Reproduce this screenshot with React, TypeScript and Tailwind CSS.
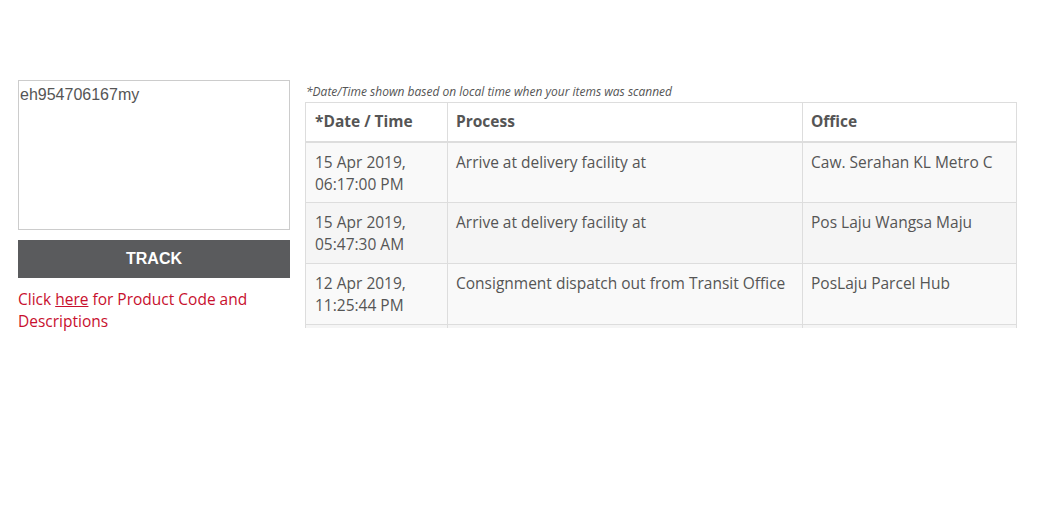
import React from "react";

const rows = [
  { date: "15 Apr 2019,", time: "06:17:00 PM", process: "Arrive at delivery facility at", office: "Caw. Serahan KL Metro C" },
  { date: "15 Apr 2019,", time: "05:47:30 AM", process: "Arrive at delivery facility at", office: "Pos Laju Wangsa Maju" },
  { date: "12 Apr 2019,", time: "11:25:44 PM", process: "Consignment dispatch out from Transit Office", office: "PosLaju Parcel Hub" },
  { date: "12 Apr 2019,", time: "09:02:11 PM", process: "Item processed", office: "PosLaju Parcel Hub" },
];

const ubuntu = { fontFamily: "'Open Sans', 'Noto Sans', sans-serif" };

export default function App() {
  return (
    <div className="w-[1041px] h-[516px] bg-white flex gap-[15px] pt-[80px] pl-[18px]" style={ubuntu}>
      {/* left: tracking input */}
      <div className="w-[272px] flex flex-col">
        <textarea
          defaultValue="eh954706167my"
          className="w-[272px] h-[150px] border border-[#cccccc] px-[1px] pt-[5px] text-[16px] leading-[18px] text-[#555555] resize-none outline-none"
          style={{ fontFamily: "'Liberation Sans', Arial, sans-serif" }}
        />
        <button
          className="mt-[10px] h-[38px] w-full bg-[#5a5b5d] text-white text-[16px] font-bold"
          style={{ fontFamily: "'Liberation Sans', Arial, sans-serif" }}
        >
          TRACK
        </button>
        <p className="mt-[10px] text-[15.5px] leading-[22px] text-[#c8102e]">
          Click <span className="underline">here</span> for Product Code and Descriptions
        </p>
      </div>

      {/* right: results */}
      <div className="w-[712px] flex flex-col">
        <p className="italic text-[12px] leading-[14px] text-[#555555] pt-[5px] pl-[1px] h-[22px] whitespace-nowrap">
          *Date/Time shown based on local time when your items was scanned
        </p>
        <div className="h-[226px] overflow-hidden">
          <table className="w-[711px] border-collapse table-fixed text-[15.5px] text-[#555555]">
            <colgroup>
              <col className="w-[142px]" />
              <col className="w-[355px]" />
              <col className="w-[214px]" />
            </colgroup>
            <thead>
              <tr className="h-[39px]">
                <th className="border border-[#dddddd] border-b-2 text-left font-bold px-[9px] py-[7px]">*Date / Time</th>
                <th className="border border-[#dddddd] border-b-2 text-left font-bold px-[8px] py-[7px]">Process</th>
                <th className="border border-[#dddddd] border-b-2 text-left font-bold px-[8px] py-[7px]">Office</th>
              </tr>
            </thead>
            <tbody>
              {rows.map((r, i) => (
                <tr key={i} className={`h-[61px] align-top ${i % 2 === 0 ? "bg-[#f9f9f9]" : "bg-[#f5f5f5]"}`}>
                  <td className="border border-[#dddddd] px-[9px] pt-[8px] leading-[22px]">
                    {r.date}
                    <br />
                    {r.time}
                  </td>
                  <td className="border border-[#dddddd] px-[8px] pt-[8px] leading-[22px]">{r.process}</td>
                  <td className="border border-[#dddddd] px-[8px] pt-[8px] leading-[22px]">{r.office}</td>
                </tr>
              ))}
            </tbody>
          </table>
        </div>
      </div>
    </div>
  );
}
